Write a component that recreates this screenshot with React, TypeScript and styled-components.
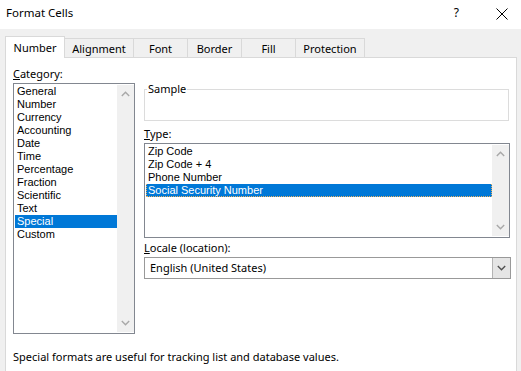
import React from 'react'
import styled, { createGlobalStyle } from 'styled-components'

const GlobalStyle = createGlobalStyle`
  * {
    box-sizing: border-box;
  }
  body {
    margin: 0;
    background: #f0f0f0;
    font-family: 'Noto Sans', 'Open Sans', sans-serif;
    font-size: 11px;
    color: #000;
  }
`

const Window = styled.div`
  width: 521px;
  height: 371px;
  overflow: hidden;
  background: #f0f0f0;
`

const TitleBar = styled.div`
  height: 29px;
  background: #fff;
  display: flex;
  align-items: flex-start;
  justify-content: space-between;
  padding: 5px 0 0 6px;
`

const Title = styled.span`
  line-height: 16px;
  font-size: 11.5px;
`

const TitleButtons = styled.div`
  display: flex;
  align-items: flex-start;
  gap: 37px;
  padding-right: 13px;
`

const Help = styled.span`
  line-height: 16px;
  font-size: 12px;
`

const TabStrip = styled.div`
  display: flex;
  align-items: flex-end;
  height: 21px;
  margin: 7px 0 0 5px;
`

const Tab = styled.div<{ active?: boolean; w: number }>`
  position: relative;
  width: ${({ w }) => w}px;
  height: ${({ active }) => (active ? 22 : 19)}px;
  margin-bottom: ${({ active }) => (active ? -1 : 0)}px;
  background: ${({ active }) => (active ? '#fff' : '#f0f0f0')};
  border: 1px solid #d9d9d9;
  border-bottom: none;
  border-left-width: ${({ active }) => (active ? 1 : 0)}px;
  z-index: ${({ active }) => (active ? 1 : 0)};
  display: flex;
  justify-content: center;
  align-items: center;
  line-height: 16px;
  padding-top: ${({ active }) => (active ? 0 : 1)}px;
`

const Panel = styled.div`
  margin-left: 5px;
  width: 512px;
  height: 320px;
  background: #fff;
  border: 1px solid #d9d9d9;
  border-bottom: none;
  padding: 8px 0 0 7px;
`

const Columns = styled.div`
  display: flex;
  gap: 9px;
`

const Column = styled.div<{ w: number }>`
  width: ${({ w }) => w}px;
  display: flex;
  flex-direction: column;
`

const Label = styled.div<{ mt?: number }>`
  line-height: 16px;
  height: 16px;
  margin-top: ${({ mt }) => mt ?? 0}px;
  margin-bottom: 1px;
  white-space: nowrap;
`

const Key = styled.span`
  text-decoration: underline;
`

const GroupBox = styled.div`
  position: relative;
  margin: 23px 2px 0 0;
  height: 32px;
  border: 1px solid #dcdcdc;
`

const Legend = styled.span`
  position: absolute;
  top: -9px;
  left: 2px;
  padding: 0 1px;
  background: #fff;
  line-height: 16px;
`

const ListBox = styled.div<{ h: number; w: number }>`
  width: ${({ w }) => w}px;
  height: ${({ h }) => h}px;
  border: 1px solid #828790;
  padding: 1px 0 0 1px;
  display: flex;
  background: #fff;
`

const Items = styled.div`
  flex: 1;
  display: flex;
  flex-direction: column;
`

// list rows are 13px apart, so the row text uses a font whose box fits that pitch
const Item = styled.div<{ selected?: boolean; focused?: boolean }>`
  height: 13px;
  line-height: 13px;
  font-family: 'Liberation Sans', Arial, sans-serif;
  font-size: 11px;
  padding-left: ${({ focused }) => (focused ? 1 : 2)}px;
  white-space: nowrap;
  background: ${({ selected }) => (selected ? '#0078d7' : 'transparent')};
  color: ${({ selected }) => (selected ? '#fff' : '#000')};
  border: ${({ focused }) => (focused ? '1px dotted #e8b060' : 'none')};
  border-top: none;
`

const ScrollBar = styled.div`
  width: 17px;
  margin-bottom: 1px;
  background: #f0f0f0;
  display: flex;
  flex-direction: column;
  justify-content: space-between;
  align-items: center;
  padding: 6px 0;
`

const Combo = styled.div`
  width: 367px;
  height: 22px;
  border: 1px solid #999;
  display: flex;
  align-items: stretch;
`

const ComboText = styled.div`
  flex: 1;
  line-height: 20px;
  padding-left: 5px;
`

const DropButton = styled.div`
  width: 18px;
  background: #e5e5e5;
  border-left: 1px solid #b4b4b4;
  display: flex;
  align-items: center;
  justify-content: center;
`

const Description = styled.div`
  margin-top: 15px;
  line-height: 16px;
`

const Chevron: React.FC<{ up?: boolean; color?: string }> = ({ up, color = '#a8a8a8' }) => (
  <svg width='9' height='6' viewBox='0 0 9 6'>
    <polyline
      points={up ? '0.8,5 4.5,1.3 8.2,5' : '0.8,1 4.5,4.7 8.2,1'}
      fill='none'
      stroke={color}
      strokeWidth='1.4'
    />
  </svg>
)

const categories = [
  'General', 'Number', 'Currency', 'Accounting', 'Date', 'Time', 'Percentage',
  'Fraction', 'Scientific', 'Text', 'Special', 'Custom',
]

const types = ['Zip Code', 'Zip Code + 4', 'Phone Number', 'Social Security Number']

const tabs: [string, number][] = [
  ['Number', 60], ['Alignment', 69], ['Font', 54], ['Border', 54], ['Fill', 54], ['Protection', 69],
]

const App: React.FC = () => {
  return (
    <Window>
      <GlobalStyle />
      <TitleBar>
        <Title>Format Cells</Title>
        <TitleButtons>
          <Help>?</Help>
          <svg width='12' height='12' viewBox='0 0 12 12' style={{ marginTop: 3 }}>
            <path d='M0.5 0.5 L11.5 11.5 M11.5 0.5 L0.5 11.5' stroke='#000' strokeWidth='1' />
          </svg>
        </TitleButtons>
      </TitleBar>
      <TabStrip>
        {tabs.map(([name, w], i) => (
          <Tab key={name} w={w} active={i === 0}>{name}</Tab>
        ))}
      </TabStrip>
      <Panel>
        <Columns>
          <Column w={122}>
            <Label><Key>C</Key>ategory:</Label>
            <ListBox w={122} h={251}>
              <Items>
                {categories.map((c) => (
                  <Item key={c} selected={c === 'Special'}>{c}</Item>
                ))}
              </Items>
              <ScrollBar>
                <Chevron up />
                <Chevron />
              </ScrollBar>
            </ListBox>
          </Column>
          <Column w={367}>
            <GroupBox>
              <Legend>Sample</Legend>
            </GroupBox>
            <Label mt={5}><Key>T</Key>ype:</Label>
            <ListBox w={366} h={95}>
              <Items>
                {types.map((t, i) => (
                  <Item key={t} selected={i === 3} focused={i === 3}>{t}</Item>
                ))}
              </Items>
              <ScrollBar>
                <Chevron up />
                <Chevron />
              </ScrollBar>
            </ListBox>
            <Label mt={2}><Key>L</Key>ocale (location):</Label>
            <Combo>
              <ComboText>English (United States)</ComboText>
              <DropButton>
                <Chevron color='#505050' />
              </DropButton>
            </Combo>
          </Column>
        </Columns>
        <Description>Special formats are useful for tracking list and database values.</Description>
      </Panel>
    </Window>
  )
}

export default App
